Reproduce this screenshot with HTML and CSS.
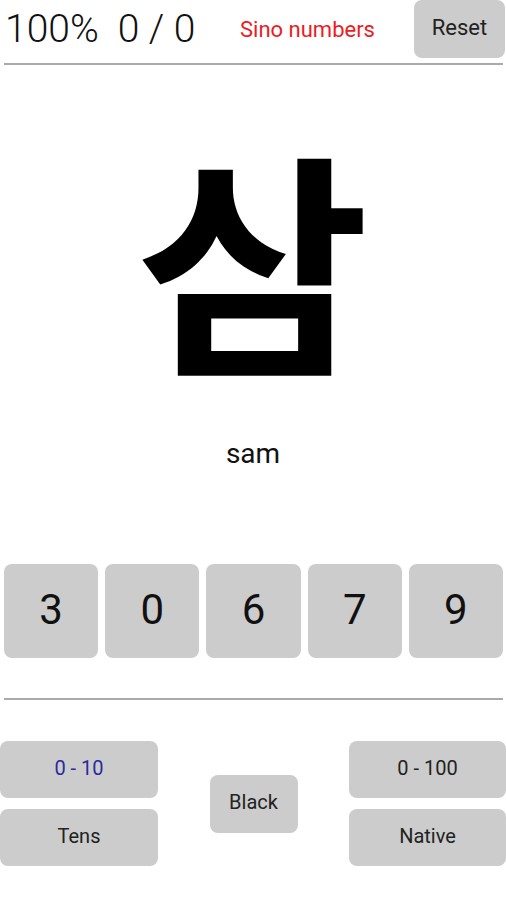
FILE: index.html
```html
<!DOCTYPE html>
<html lang="ko">
<head>
    <meta charset="UTF-8">
    <meta name="viewport" content="width=device-width, initial-scale=1.0">
    <title>Korean Numbers</title>
    <link rel="stylesheet" href="styles.css">
</head>
<body>
    <div class="app">
        <div class="top-bar">
            <div class="score">100%&nbsp; 0 / 0</div>
            <div class="mode">Sino numbers</div>
            <button class="btn reset">Reset</button>
        </div>
        <div class="divider top"></div>

        <div class="card">
            <div class="hangul"><span>삼</span></div>
            <div class="roman">sam</div>
        </div>

        <div class="answers">
            <button class="btn key">3</button>
            <button class="btn key">0</button>
            <button class="btn key">6</button>
            <button class="btn key">7</button>
            <button class="btn key">9</button>
        </div>
        <div class="divider bottom"></div>

        <div class="options">
            <div class="col">
                <button class="btn opt active">0 - 10</button>
                <button class="btn opt">Tens</button>
            </div>
            <button class="btn small">Black</button>
            <div class="col">
                <button class="btn opt">0 - 100</button>
                <button class="btn opt">Native</button>
            </div>
        </div>
    </div>
</body>
</html>
```

FILE: styles.css
```css
body {
    margin: 0;
    background-color: #fff;
    font-family: Roboto, "Noto Sans", sans-serif;
    color: #111;
}

.app {
    width: 506px;
    height: 900px;
}

.btn {
    font-family: Roboto, sans-serif;
    background-color: #cccccc;
    border: none;
    border-radius: 8px;
    color: #222;
    padding: 0 0 4px;
    cursor: pointer;
}

.top-bar {
    display: flex;
    align-items: center;
    height: 58px;
}

.score {
    font-size: 39px;
    font-weight: 300;
    color: #111;
    padding-left: 5px;
    width: 235px;
    white-space: nowrap;
}

.mode {
    font-size: 22px;
    color: #ec1c24;
    flex: 1;
}

.reset {
    align-self: flex-start;
    width: 91px;
    height: 58px;
    font-size: 22px;
    margin-right: 1px;
}

.divider {
    height: 2px;
    background-color: #aaaaaa;
    margin: 0 3px 0 4px;
}

.divider.top {
    margin-top: 5px;
}

.card {
    box-sizing: border-box;
    height: 499px;
    padding-top: 71px;
}

.hangul {
    font-family: "Noto Sans CJK KR", sans-serif;
    font-weight: 700;
    font-size: 236px;
    line-height: 236px;
    height: 236px;
    text-align: center;
    color: #000;
}

.hangul span {
    display: inline-block;
    transform: scaleX(1.08);
}

.roman {
    font-size: 28px;
    line-height: 33px;
    margin-top: 65px;
    text-align: center;
    color: #111;
}

.answers {
    display: flex;
    gap: 7px;
    padding: 0 3px 0 4px;
}

.key {
    flex: 1;
    height: 94px;
    font-size: 42px;
    color: #111;
}

.divider.bottom {
    margin-top: 40px;
}

.options {
    display: flex;
    justify-content: space-between;
    align-items: center;
    margin-top: 41px;
}

.col {
    display: flex;
    flex-direction: column;
    gap: 11px;
    width: 158px;
}

.col:last-child {
    width: 157px;
}

.opt {
    height: 57px;
    font-size: 20px;
}

.opt.active {
    color: #2a2aa0;
}

.small {
    width: 88px;
    height: 58px;
    font-size: 20px;
}
```
